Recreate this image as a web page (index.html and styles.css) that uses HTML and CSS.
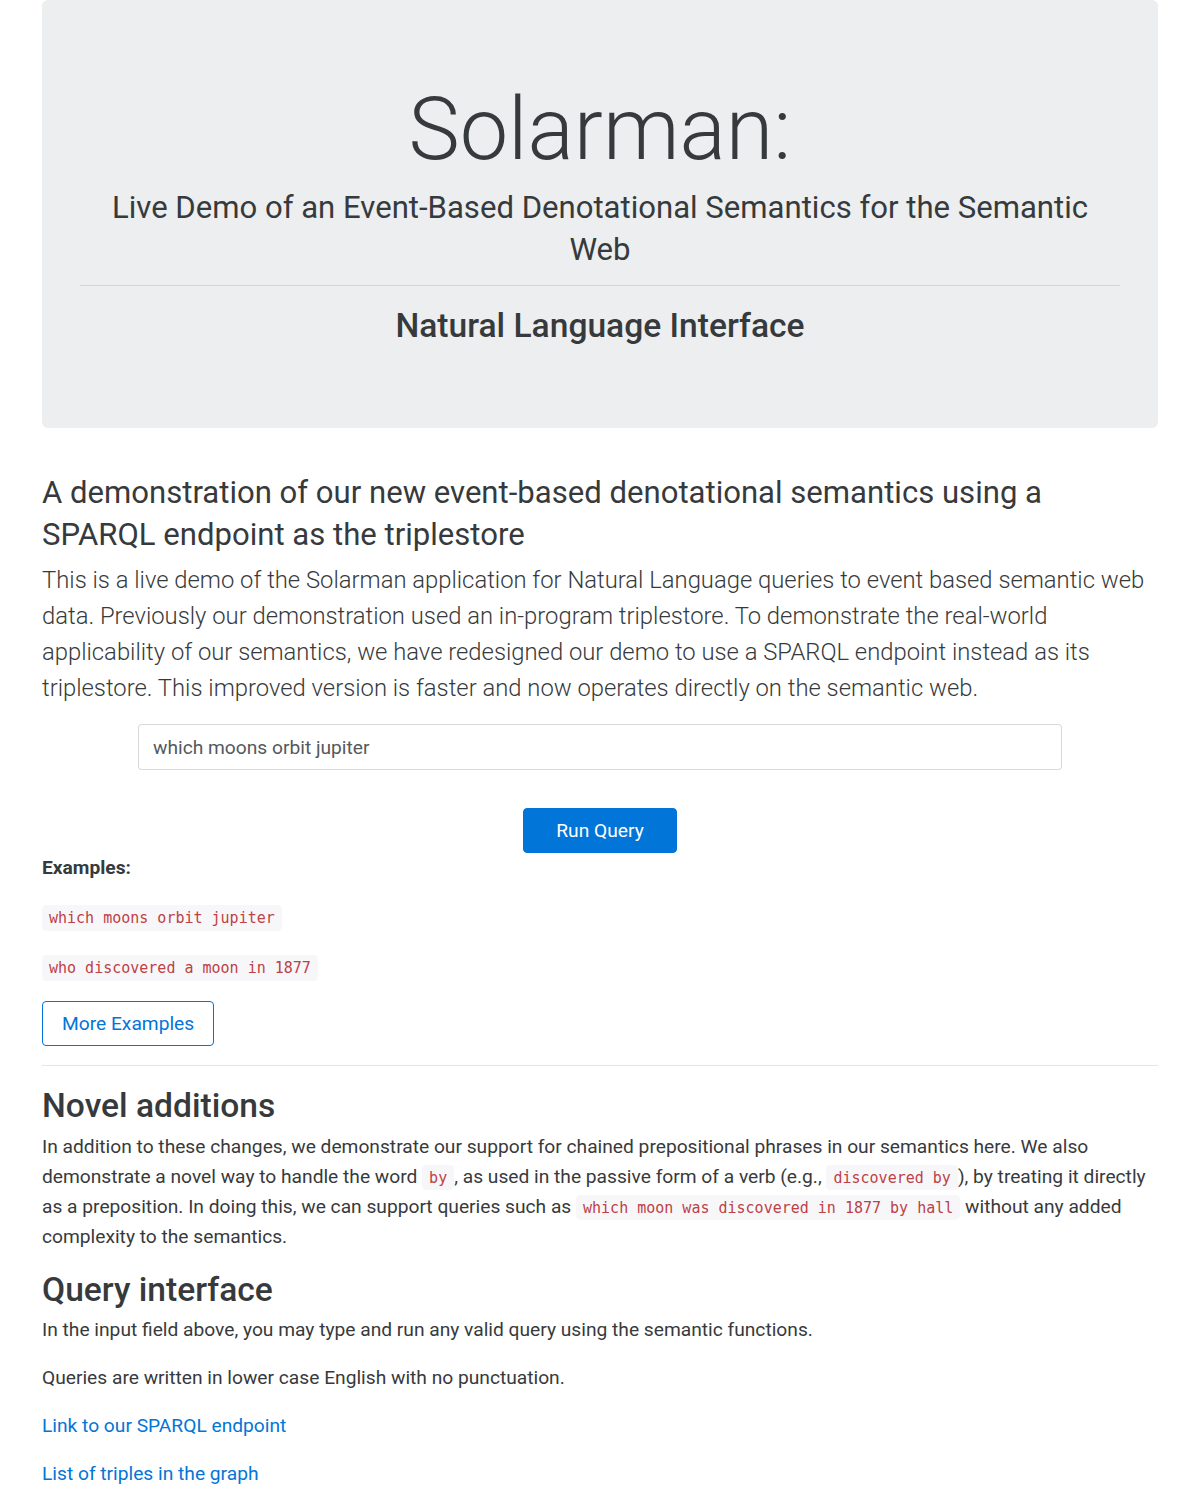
FILE: index.html
```html
<!DOCTYPE html>
<html lang="en">
<head>
<meta charset="utf-8">
<title>Solarman</title>
<link rel="stylesheet" href="styles.css">
</head>
<body>
<div class="container">
  <div class="jumbotron">
    <h1 class="display-title">Solarman:</h1>
    <h2 class="subtitle">Live Demo of an Event-Based Denotational Semantics for the Semantic Web</h2>
    <hr class="jumbo-rule">
    <h3 class="nli-title">Natural Language Interface</h3>
  </div>

  <h2 class="intro-title">A demonstration of our new event-based denotational semantics using a SPARQL endpoint as the triplestore</h2>
  <p class="lead">This is a live demo of the Solarman application for Natural Language queries to event based semantic web data. Previously our demonstration used an in-program triplestore. To demonstrate the real-world applicability of our semantics, we have redesigned our demo to use a SPARQL endpoint instead as its triplestore. This improved version is faster and now operates directly on the semantic web.</p>

  <form class="query-form">
    <div class="input-row">
      <input class="query-input" type="text" value="which moons orbit jupiter">
    </div>
    <div class="button-row">
      <button type="button" class="btn btn-primary">Run Query</button>
    </div>
  </form>

  <p class="examples-label">Examples:</p>
  <p class="example-line"><code>which moons orbit jupiter</code></p>
  <p class="example-line"><code>who discovered a moon in 1877</code></p>
  <button type="button" class="btn btn-outline">More Examples</button>

  <hr class="section-rule">

  <h2 class="section-title">Novel additions</h2>
  <p class="text">In addition to these changes, we demonstrate our support for chained prepositional phrases in our semantics here. We also demonstrate a novel way to handle the word <code>by</code>, as used in the passive form of a verb (e.g., <code>discovered by</code>), by treating it directly as a preposition. In doing this, we can support queries such as <code>which moon was discovered in 1877 by hall</code> without any added complexity to the semantics.</p>

  <h2 class="section-title">Query interface</h2>
  <p class="text">In the input field above, you may type and run any valid query using the semantic functions.</p>
  <p class="text">Queries are written in lower case English with no punctuation.</p>
  <p class="text"><a href="#">Link to our SPARQL endpoint</a></p>
  <p class="text"><a href="#">List of triples in the graph</a></p>
</div>
</body>
</html>
```

FILE: styles.css
```css
html, body {
  margin: 0;
  padding: 0;
  background: #ffffff;
}

body {
  font-family: Roboto, "Liberation Sans", sans-serif;
  font-size: 19.2px;
  line-height: 30px;
  color: #373a3c;
}

.container {
  padding: 0 42px;
}

.jumbotron {
  background: #eceeef;
  border-radius: 6px;
  padding: 80px 38px 82px;
  text-align: center;
}

.display-title {
  margin: 0;
  font-size: 86.4px;
  line-height: 100px;
  font-weight: 300;
}

.subtitle {
  margin: 7px 0 0;
  padding: 0 15px;
  font-size: 31.1px;
  line-height: 42px;
  font-weight: 400;
}

.jumbo-rule {
  margin: 14px 0 0;
  border: 0;
  border-top: 1px solid rgba(0, 0, 0, 0.1);
  height: 0;
}

.nli-title {
  margin: 20px 0 0;
  font-size: 33.6px;
  line-height: 40px;
  font-weight: 500;
}

.intro-title {
  max-width: 1060px;
  margin: 44px 0 6px;
  font-size: 31.1px;
  line-height: 42px;
  font-weight: 400;
}

.lead {
  margin: 0 0 18px;
  font-size: 23.8px;
  line-height: 36px;
  font-weight: 300;
}

.query-form {
  margin: 0;
}

.input-row {
  padding: 0 96px;
}

.query-input {
  display: block;
  box-sizing: border-box;
  width: 100%;
  height: 46px;
  margin: 0;
  padding: 0 14px;
  font-family: Roboto, "Liberation Sans", sans-serif;
  font-size: 19.2px;
  color: #55595c;
  background: #fff;
  border: 1px solid rgba(0, 0, 0, 0.15);
  border-radius: 4px;
  outline: none;
}

.button-row {
  display: flex;
  justify-content: center;
  margin-top: 38px;
}

.btn {
  box-sizing: border-box;
  height: 45px;
  font-family: Roboto, "Liberation Sans", sans-serif;
  font-size: 19.2px;
  line-height: 27px;
  border-radius: 4px;
  cursor: pointer;
}

.btn-primary {
  padding: 0 32px;
  color: #fff;
  background: #0275d8;
  border: 1px solid #0275d8;
}

.btn-outline {
  display: block;
  padding: 0 19px;
  color: #0275d8;
  background: transparent;
  border: 1px solid #0275d8;
}

.examples-label {
  margin: 0 0 18px;
  font-weight: 700;
}

.example-line {
  margin: 0 0 18px;
  line-height: 32px;
}

code {
  font-family: "DejaVu Sans Mono", monospace;
  font-size: 15px;
  line-height: 1;
  color: #bd4147;
  background: #f7f7f9;
  padding: 3.6px 7px;
  border-radius: 4.5px;
}

.section-rule {
  margin: 19px 0 0;
  border: 0;
  border-top: 1px solid rgba(0, 0, 0, 0.1);
  height: 0;
}

.section-title {
  margin: 20px 0 5.5px;
  font-size: 33.6px;
  line-height: 40px;
  font-weight: 500;
}

.text {
  margin: 0 0 18px;
}

.text + .section-title {
  margin-top: 0;
}

a {
  color: #0275d8;
  text-decoration: none;
}
```
